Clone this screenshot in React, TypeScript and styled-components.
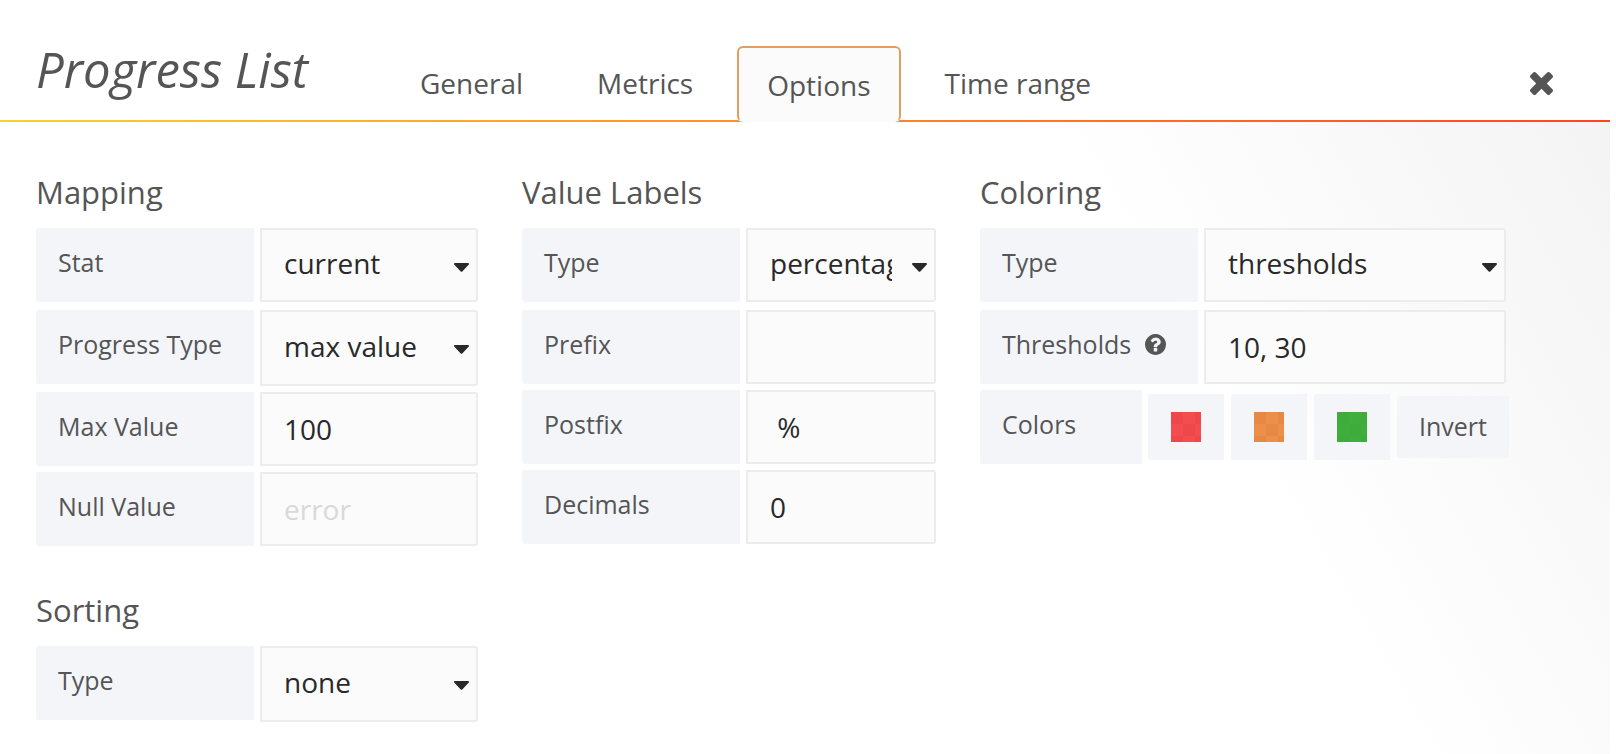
import React from 'react';
import styled, { createGlobalStyle, css } from 'styled-components';

const GlobalStyle = createGlobalStyle`
  *, *::before, *::after { box-sizing: border-box; }
  body {
    margin: 0;
    background: #fff;
    color: #555;
    font-family: "Open Sans", "Noto Sans", sans-serif;
    font-size: 28px;
  }
  button, input, select { font: inherit; color: inherit; margin: 0; }
`;

const Editor = styled.section`
  display: flex;
  flex-direction: column;
  min-height: 100vh;
  padding-right: 6px;
`;

const Header = styled.header`
  display: flex;
  align-items: flex-end;
  height: 122px;
  padding: 0 50px 0 36px;
  background: linear-gradient(to right, #fdcf2f, #ff8a2b 50%, #fd4524) left bottom / 100% 2px no-repeat;
`;

const Title = styled.h2`
  flex: none;
  width: 354px;
  margin: 0;
  padding-bottom: 18px;
  font-size: 49px;
  line-height: 70px;
  font-weight: 400;
  font-style: italic;
`;

const Tabs = styled.nav`
  display: flex;
  flex: 1;
  align-items: flex-end;
  gap: 14px;
`;

const Tab = styled.button<{ $active?: boolean }>`
  height: 76px;
  padding: 0 28px 4px;
  border: 2px solid transparent;
  border-bottom: 0;
  border-radius: 6px;
  background: none;
  cursor: pointer;
  ${(p) =>
    p.$active &&
    css`
      padding: 2px 28px 0;
      border: 2px solid #e29d62;
      border-bottom-color: #fbfbfb;
      background: #fbfbfb;
    `}
`;

const CloseButton = styled.button`
  display: flex;
  align-items: center;
  height: 76px;
  padding: 0 7px 2px;
  border: 0;
  background: none;
  cursor: pointer;
`;

const Content = styled.div`
  display: flex;
  flex: 1;
  flex-direction: column;
  gap: 40px;
  padding: 46px 30px 34px 36px;
  background: linear-gradient(60deg, transparent 72%, #f4f4f4 99%);
`;

const Groups = styled.div`
  display: flex;
  flex-wrap: wrap;
  align-items: flex-start;
  gap: 42px 44px;
`;

const Group = styled.section`
  display: flex;
  flex-direction: column;
  gap: 6px;
`;

const GroupTitle = styled.h3`
  margin: 0 0 6px;
  font-size: 31px;
  line-height: 48px;
  font-weight: 400;
`;

const Row = styled.div`
  display: flex;
  align-items: flex-start;
  gap: 6px;
`;

const Label = styled.label<{ $width?: number }>`
  display: flex;
  align-items: center;
  gap: 14px;
  flex: none;
  width: ${(p) => p.$width ?? 218}px;
  height: 74px;
  padding: 0 0 6px 22px;
  border-radius: 3px 0 0 3px;
  background: #f4f5f9;
  font-size: 25px;
`;

const field = css<{ $width: number }>`
  width: ${(p) => p.$width}px;
  height: 74px;
  padding: 0 22px;
  border: 2px solid #ececec;
  border-radius: 0 3px 3px 0;
  background: #fbfbfb;
  color: #292929;
  outline: none;
`;

const Input = styled.input<{ $width: number }>`
  ${field}
  &::placeholder { color: #d8d9da; opacity: 1; }
`;

const SelectBox = styled.div`
  display: grid;
  align-items: start;
  justify-items: end;
  min-height: 76px;
  & > * { grid-area: 1 / 1; }
`;

const SelectField = styled.select<{ $width: number; $tall?: boolean }>`
  ${field}
  ${(p) => p.$tall && 'height: 76px;'}
  padding: 0 42px 4px 22px;
  appearance: none;
`;

const Caret = styled.svg`
  margin: 35px 9px 0 0;
  pointer-events: none;
`;

const Swatches = styled.div`
  display: flex;
  align-items: center;
  gap: 7px;
  height: 74px;
`;

const SwatchButton = styled.button`
  display: flex;
  align-items: center;
  justify-content: center;
  width: 76px;
  height: 66px;
  padding: 0;
  border: 0;
  border-radius: 3px 0 0 3px;
  background: #f4f5f9;
  cursor: pointer;
`;

const Swatch = styled.span<{ $light: string; $dark: string }>`
  width: 30px;
  height: 30px;
  background: conic-gradient(
      ${(p) => p.$light} 25%, ${(p) => p.$dark} 0 50%,
      ${(p) => p.$light} 0 75%, ${(p) => p.$dark} 0
    ) 0 0 / 24px 24px;
`;

const InvertButton = styled.button`
  height: 62px;
  padding: 0 22px 2px;
  border: 0;
  border-radius: 3px;
  background: #f4f5f9;
  font-size: 25px;
  cursor: pointer;
`;

const CloseIcon = () => (
  <svg width="23" height="23" viewBox="110 258 1188 1188" fill="#555" aria-hidden="true">
    <path d="M1298 1214q0 40-28 68l-136 136q-28 28-68 28t-68-28l-294-294-294 294q-28 28-68 28t-68-28l-136-136q-28-28-28-68t28-68l294-294-294-294q-28-28-28-68t28-68l136-136q28-28 68-28t68 28l294 294 294-294q28-28 68-28t68 28l136 136q28 28 28 68t-28 68l-294 294 294 294q28 28 28 68z" />
  </svg>
);

const HelpIcon = () => (
  <svg width="21" height="21" viewBox="128 128 1536 1536" fill="#555" aria-hidden="true">
    <path d="M1024 1376v-192q0-14-9-23t-23-9h-192q-14 0-23 9t-9 23v192q0 14 9 23t23 9h192q14 0 23-9t9-23zm256-672q0-88-55.5-163t-138.5-116-170-41q-243 0-371 213-15 24 8 42l132 100q7 6 19 6 16 0 25-12 53-68 86-92 34-24 86-24 48 0 85.5 26t37.5 59q0 38-20 61t-68 45q-63 28-115.5 86.5t-52.5 125.5v36q0 14 9 23t23 9h192q14 0 23-9t9-23q0-19 21.5-49.5t54.5-49.5q32-18 49-28.5t46-35 44.5-48 28-60.500 12.500-81zm384 192q0 209-103 385.500t-279.500 279.500-385.500 103-385.500-103-279.500-279.500-103-385.500 103-385.500 279.500-279.500 385.500-103 385.500 103 279.500 279.500 103 385.500z" />
  </svg>
);

interface SelectProps {
  id: string;
  width: number;
  value: string;
  options: string[];
  tall?: boolean;
}

const Select = ({ id, width, value, options, tall }: SelectProps) => (
  <SelectBox>
    <SelectField id={id} $width={width} $tall={tall} defaultValue={value}>
      {options.map((o) => (
        <option key={o}>{o}</option>
      ))}
    </SelectField>
    <Caret width="15" height="9" viewBox="0 0 15 9" fill="#292929" aria-hidden="true">
      <path d="M1 0h13q1 0 1 1 0 .4-.4.8L8.3 8.4q-.8.7-1.6 0L.4 1.8Q0 1.400 0 1 0 0 1 0z" />
    </Caret>
  </SelectBox>
);

const tabs = ['General', 'Metrics', 'Options', 'Time range'];

const colors = [
  { name: 'Red', light: '#f34d50', dark: '#ee484b' },
  { name: 'Orange', light: '#ec8f4b', dark: '#e68944' },
  { name: 'Green', light: '#40ae3d', dark: '#3eac3a' },
];

export default function App() {
  return (
    <>
      <GlobalStyle />
      <Editor>
        <Header>
          <Title>Progress List</Title>
          <Tabs>
            {tabs.map((t) => (
              <Tab key={t} type="button" $active={t === 'Options'}>
                {t}
              </Tab>
            ))}
          </Tabs>
          <CloseButton type="button" aria-label="Close">
            <CloseIcon />
          </CloseButton>
        </Header>
        <Content>
          <Groups>
            <Group>
              <GroupTitle>Mapping</GroupTitle>
              <Row>
                <Label htmlFor="stat">Stat</Label>
                <Select id="stat" width={218} value="current" options={['current', 'min', 'max', 'avg', 'total']} />
              </Row>
              <Row>
                <Label htmlFor="progress-type">Progress Type</Label>
                <Select id="progress-type" width={218} tall value="max value" options={['max value', 'shared']} />
              </Row>
              <Row>
                <Label htmlFor="max-value">Max Value</Label>
                <Input id="max-value" $width={218} defaultValue="100" />
              </Row>
              <Row>
                <Label htmlFor="null-value">Null Value</Label>
                <Input id="null-value" $width={218} placeholder="error" />
              </Row>
            </Group>
            <Group>
              <GroupTitle>Value Labels</GroupTitle>
              <Row>
                <Label htmlFor="label-type">Type</Label>
                <Select id="label-type" width={190} value="percentage" options={['percentage', 'value']} />
              </Row>
              <Row>
                <Label htmlFor="prefix">Prefix</Label>
                <Input id="prefix" $width={190} />
              </Row>
              <Row>
                <Label htmlFor="postfix">Postfix</Label>
                <Input id="postfix" $width={190} defaultValue=" %" />
              </Row>
              <Row>
                <Label htmlFor="decimals">Decimals</Label>
                <Input id="decimals" $width={190} defaultValue="0" />
              </Row>
            </Group>
            <Group>
              <GroupTitle>Coloring</GroupTitle>
              <Row>
                <Label htmlFor="coloring-type">Type</Label>
                <Select id="coloring-type" width={302} value="thresholds" options={['thresholds', 'none']} />
              </Row>
              <Row>
                <Label htmlFor="thresholds">
                  Thresholds
                  <HelpIcon />
                </Label>
                <Input id="thresholds" $width={302} defaultValue="10, 30" />
              </Row>
              <Row>
                <Label as="span" $width={162}>Colors</Label>
                <Swatches>
                  {colors.map((c) => (
                    <SwatchButton key={c.name} type="button" aria-label={c.name}>
                      <Swatch $light={c.light} $dark={c.dark} />
                    </SwatchButton>
                  ))}
                  <InvertButton type="button">Invert</InvertButton>
                </Swatches>
              </Row>
            </Group>
          </Groups>
          <Group>
            <GroupTitle>Sorting</GroupTitle>
            <Row>
              <Label htmlFor="sorting">Type</Label>
              <Select id="sorting" width={218} tall value="none" options={['none', 'asc', 'desc']} />
            </Row>
          </Group>
        </Content>
      </Editor>
    </>
  );
}
